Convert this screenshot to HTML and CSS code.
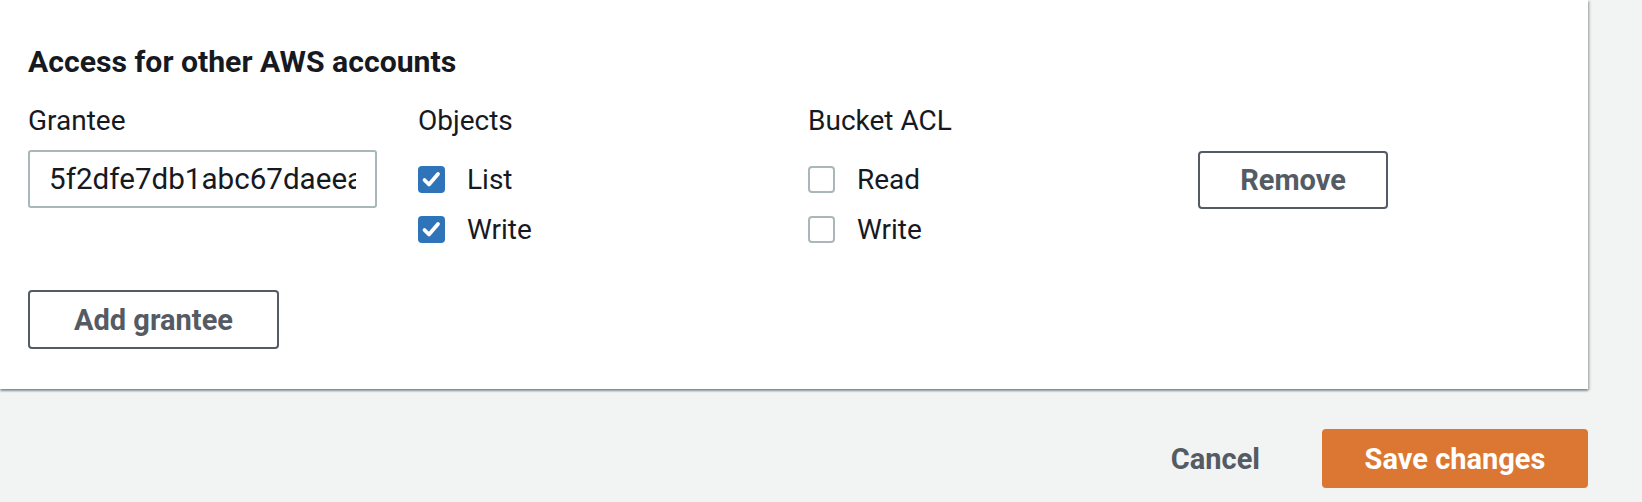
FILE: index.html
```html
<!DOCTYPE html>
<html lang="en">
<head>
    <meta charset="UTF-8">
    <meta name="viewport" content="width=device-width, initial-scale=1.0">
    <title>Edit ACL</title>
    <link rel="stylesheet" href="styles.css">
</head>
<body>
    <div class="page">
        <div class="panel">
            <h2 class="panel-title">Access for other AWS accounts</h2>

            <div class="grantee-grid">
                <div class="col-label">Grantee</div>
                <div class="col-label">Objects</div>
                <div class="col-label">Bucket ACL</div>
                <div class="col-label"></div>

                <div class="field">
                    <input class="text-input" type="text" value="5f2dfe7db1abc67daeea3b1c9e8a0f4d2c7b6e5a1d3f8c9b0e2a4d6f8b1c3e5a7">
                </div>

                <ul class="check-list">
                    <li class="check-item">
                        <span class="box checked">
                            <svg viewBox="0 0 27 27" width="27" height="27"><path d="M6.5 14 L11 18.5 L20 8" fill="none" stroke="#fff" stroke-width="3.8" stroke-linecap="round" stroke-linejoin="round"/></svg>
                        </span>
                        List
                    </li>
                    <li class="check-item">
                        <span class="box checked">
                            <svg viewBox="0 0 27 27" width="27" height="27"><path d="M6.5 14 L11 18.5 L20 8" fill="none" stroke="#fff" stroke-width="3.8" stroke-linecap="round" stroke-linejoin="round"/></svg>
                        </span>
                        Write
                    </li>
                </ul>

                <ul class="check-list">
                    <li class="check-item"><span class="box"></span>Read</li>
                    <li class="check-item"><span class="box"></span>Write</li>
                </ul>

                <div class="remove-cell">
                    <button class="btn">Remove</button>
                </div>
            </div>

            <button class="btn add-btn">Add grantee</button>
        </div>

        <div class="actions">
            <button class="btn btn-link">Cancel</button>
            <button class="btn btn-primary">Save changes</button>
        </div>
    </div>
</body>
</html>
```
FILE: styles.css
```css
body {
    margin: 0;
    background: #f2f3f3;
    font-family: Roboto, "Liberation Sans", sans-serif;
    color: #16191f;
}
.page {
    width: 1588px;
}
.panel {
    background: #fff;
    padding: 44px 28px 40px 28px;
    box-shadow: 0 2px 2px 0 rgba(0, 28, 36, 0.4), 2px 1px 2px 0 rgba(0, 28, 36, 0.18);
}
.panel-title {
    margin: 0 0 24px 0;
    font-size: 30.2px;
    line-height: 36px;
    font-weight: 700;
}
.grantee-grid {
    display: grid;
    grid-template-columns: repeat(4, 349px);
    column-gap: 41px;
    row-gap: 12px;
    align-items: start;
}
.col-label {
    font-size: 28px;
    line-height: 34px;
    height: 34px;
}
.text-input {
    box-sizing: border-box;
    width: 349px;
    height: 58px;
    border: 2px solid #aab7b8;
    border-radius: 3px;
    padding: 0 19px 0 19px;
    font-family: Roboto, "Liberation Sans", sans-serif;
    font-size: 29.6px;
    color: #16191f;
    outline: none;
}
.check-list {
    list-style: none;
    margin: 12px 0 0 0;
    padding: 0;
    display: flex;
    flex-direction: column;
    gap: 16px;
}
.check-item {
    display: flex;
    align-items: center;
    gap: 22px;
    height: 34px;
    font-size: 28px;
}
.box {
    box-sizing: border-box;
    width: 27px;
    height: 27px;
    border: 2px solid #aab7b8;
    border-radius: 4px;
    background: #fff;
    display: flex;
}
.box.checked {
    border: none;
    background: #2f73b8;
}
.remove-cell {
    padding-top: 1px;
}
.btn {
    box-sizing: border-box;
    height: 59px;
    padding: 0 40px;
    border: 2px solid #545b64;
    border-radius: 4px;
    background: #fff;
    color: #545b64;
    font-family: Roboto, "Liberation Sans", sans-serif;
    font-size: 29px;
    font-weight: 700;
    line-height: 34px;
    cursor: pointer;
}
.remove-cell .btn {
    height: 58px;
    width: 190px;
}
.add-btn {
    display: block;
    margin-top: 44px;
    width: 251px;
}
.actions {
    display: flex;
    justify-content: flex-end;
    gap: 20px;
    margin-top: 40px;
}
.btn-link {
    border-color: transparent;
    background: transparent;
}
.btn-primary {
    width: 266px;
    border-color: #dc7733;
    background: #dc7733;
    color: #fff;
}
```
